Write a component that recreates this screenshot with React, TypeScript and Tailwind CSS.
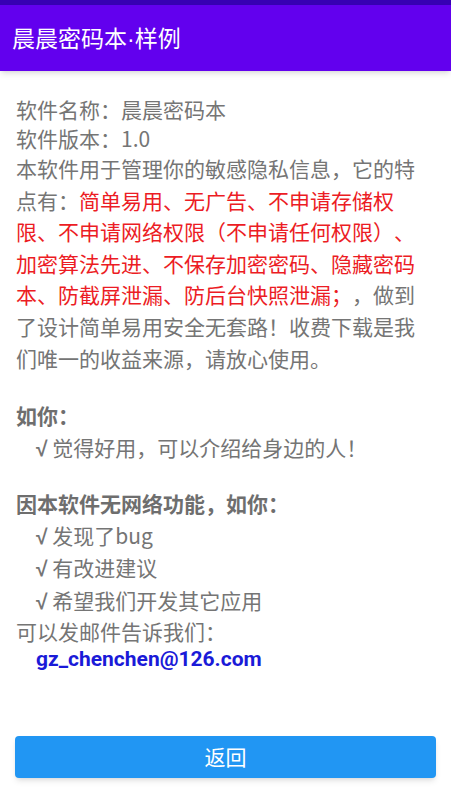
import React from 'react';

const font = { fontFamily: '"Noto Sans CJK SC", "Noto Sans", sans-serif' };

const Check: React.FC<{ children: React.ReactNode }> = ({ children }) => (
  <div className="pl-5 leading-[31.5px]">
    <span className="font-bold" style={{ fontFamily: '"Liberation Sans", sans-serif' }}>√</span> {children}
  </div>
);

const App: React.FC = () => {
  return (
    <div
      className="w-[451px] h-[800px] flex flex-col bg-white overflow-hidden [text-spacing-trim:space-all]"
      style={font}
    >
      <div className="h-[5px] bg-[#3700B3]" />
      <header className="h-[66px] bg-[#6200EE] flex items-center px-3 shadow-md">
        <h1 className="text-[23px] text-white">
          晨晨密码本<span style={{ fontFamily: '"Liberation Sans", sans-serif' }}>·</span>样例
        </h1>
      </header>

      <main className="flex-1 px-4 pt-[24px] text-[21px] text-[#757575]">
        <div className="leading-[29px]">软件名称：晨晨密码本</div>
        <div className="leading-[29px]">软件版本：1.0</div>
        <p className="leading-[31.6px]">
          本软件用于管理你的敏感隐私信息，它的特点有：
          <span className="text-[#EC1C24]">
            简单易用、无广告、不申请存储权限、不申请网络权限（不申请任何权限）、加密算法先进、不保存加密密码、隐藏密码本、防截屏泄漏、防后台快照泄漏；
          </span>
          ，做到了设计简单易用安全无套路！收费下载是我们唯一的收益来源，请放心使用。
        </p>

        <div className="mt-[26px] font-bold text-[#6e6e6e] leading-[31.5px]">如你：</div>
        <Check>觉得好用，可以介绍给身边的人！</Check>

        <div className="mt-[24px] font-bold text-[#6e6e6e] leading-[31.5px]">因本软件无网络功能，如你：</div>
        <Check>发现了bug</Check>
        <Check>有改进建议</Check>
        <Check>希望我们开发其它应用</Check>
        <div className="leading-[29px]">可以发邮件告诉我们：</div>
        <div
          className="pl-5 leading-[27px] font-bold text-[#1A1AD8]"
          style={{ fontFamily: 'Roboto, "Noto Sans", sans-serif' }}
        >
          gz_chenchen@126.com
        </div>
      </main>

      <footer className="px-[15px] pb-[22px]">
        <button className="w-full h-[42px] rounded bg-[#2196F3] text-white text-[21px] shadow-md flex items-center justify-center">
          返回
        </button>
      </footer>
    </div>
  );
};

export default App;
